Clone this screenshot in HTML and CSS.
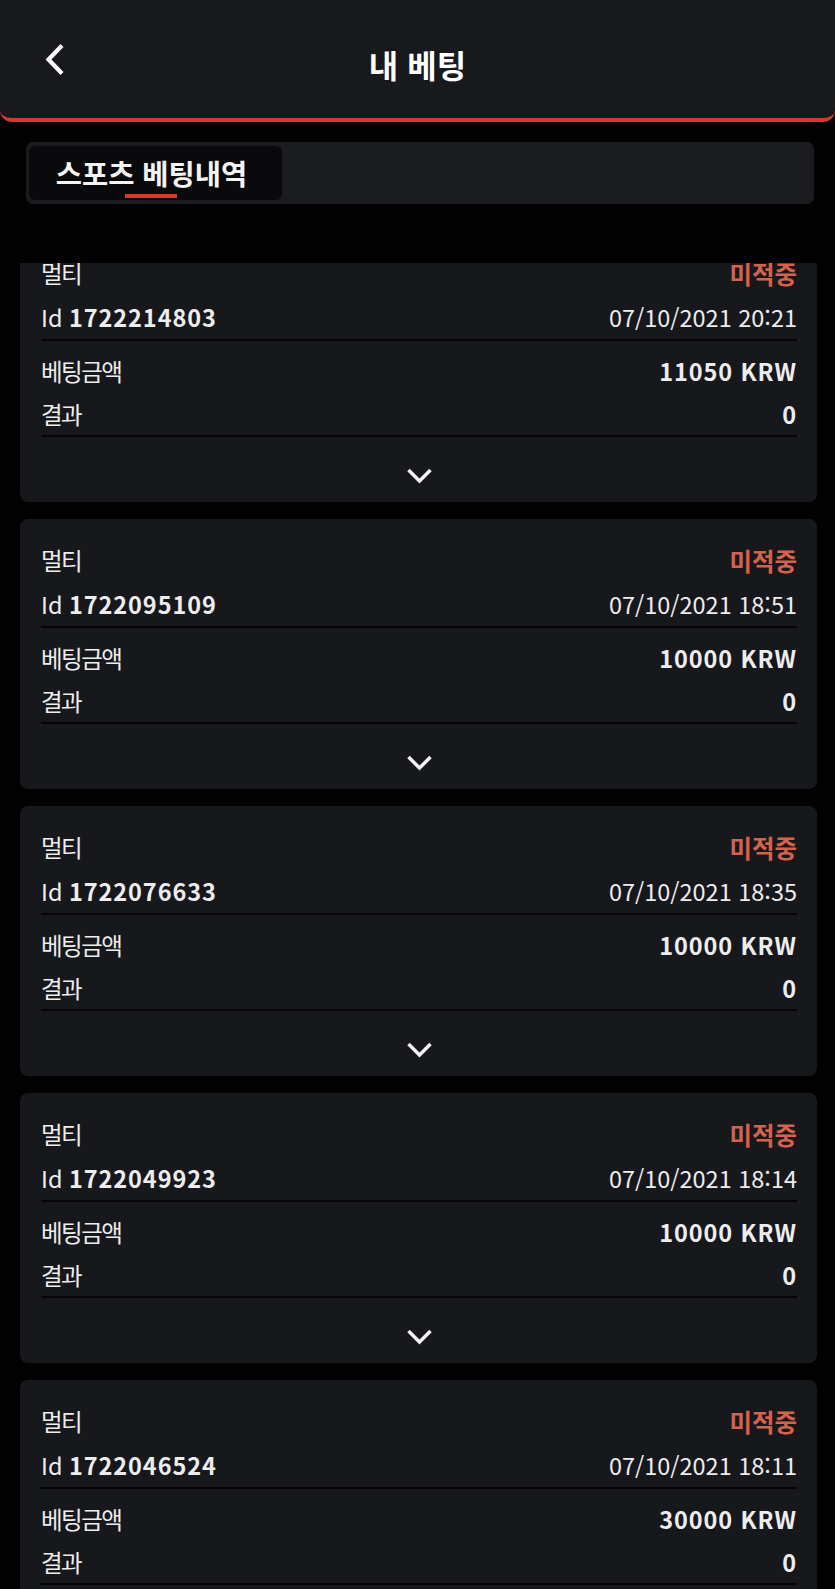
FILE: index.html
```html
<!DOCTYPE html>
<html lang="ko">
<head>
  <meta charset="UTF-8">
  <meta name="viewport" content="width=device-width, initial-scale=1.0">
  <title>내 베팅</title>
  <link rel="stylesheet" href="styles.css">
</head>
<body>
  <div class="page">
    <header class="top-bar">
      <button class="back-btn" aria-label="뒤로">
        <svg width="20" height="33" viewBox="0 0 20 33"><polyline points="17,2.5 3.5,16.5 17,30.5" fill="none" stroke="#fff" stroke-width="4.2" stroke-linejoin="miter"/></svg>
      </button>
      <h1 class="top-title">내 베팅</h1>
      <span></span>
    </header>

    <nav class="tabs">
      <div class="tab active">스포츠 베팅내역</div>
    </nav>

    <div class="bet-list">
      <div class="bet-list-inner">

        <div class="bet-card">
          <div class="bet-head">
            <div class="row"><span class="label">멀티</span><span class="status">미적중</span></div>
            <div class="row"><span>Id <b>1722214803</b></span><span>07/10/2021 20:21</span></div>
          </div>
          <div class="bet-body">
            <div class="row"><span class="label">베팅금액</span><b>11050 KRW</b></div>
            <div class="row"><span class="label">결과</span><b>0</b></div>
          </div>
          <div class="bet-foot">
            <svg width="27" height="17" viewBox="0 0 27 17"><polyline points="2.5,3 13.5,14 24.5,3" fill="none" stroke="#f2f2f2" stroke-width="3.5"/></svg>
          </div>
        </div>

        <div class="bet-card">
          <div class="bet-head">
            <div class="row"><span class="label">멀티</span><span class="status">미적중</span></div>
            <div class="row"><span>Id <b>1722095109</b></span><span>07/10/2021 18:51</span></div>
          </div>
          <div class="bet-body">
            <div class="row"><span class="label">베팅금액</span><b>10000 KRW</b></div>
            <div class="row"><span class="label">결과</span><b>0</b></div>
          </div>
          <div class="bet-foot">
            <svg width="27" height="17" viewBox="0 0 27 17"><polyline points="2.5,3 13.5,14 24.5,3" fill="none" stroke="#f2f2f2" stroke-width="3.5"/></svg>
          </div>
        </div>

        <div class="bet-card">
          <div class="bet-head">
            <div class="row"><span class="label">멀티</span><span class="status">미적중</span></div>
            <div class="row"><span>Id <b>1722076633</b></span><span>07/10/2021 18:35</span></div>
          </div>
          <div class="bet-body">
            <div class="row"><span class="label">베팅금액</span><b>10000 KRW</b></div>
            <div class="row"><span class="label">결과</span><b>0</b></div>
          </div>
          <div class="bet-foot">
            <svg width="27" height="17" viewBox="0 0 27 17"><polyline points="2.5,3 13.5,14 24.5,3" fill="none" stroke="#f2f2f2" stroke-width="3.5"/></svg>
          </div>
        </div>

        <div class="bet-card">
          <div class="bet-head">
            <div class="row"><span class="label">멀티</span><span class="status">미적중</span></div>
            <div class="row"><span>Id <b>1722049923</b></span><span>07/10/2021 18:14</span></div>
          </div>
          <div class="bet-body">
            <div class="row"><span class="label">베팅금액</span><b>10000 KRW</b></div>
            <div class="row"><span class="label">결과</span><b>0</b></div>
          </div>
          <div class="bet-foot">
            <svg width="27" height="17" viewBox="0 0 27 17"><polyline points="2.5,3 13.5,14 24.5,3" fill="none" stroke="#f2f2f2" stroke-width="3.5"/></svg>
          </div>
        </div>

        <div class="bet-card">
          <div class="bet-head">
            <div class="row"><span class="label">멀티</span><span class="status">미적중</span></div>
            <div class="row"><span>Id <b>1722046524</b></span><span>07/10/2021 18:11</span></div>
          </div>
          <div class="bet-body">
            <div class="row"><span class="label">베팅금액</span><b>30000 KRW</b></div>
            <div class="row"><span class="label">결과</span><b>0</b></div>
          </div>
          <div class="bet-foot">
            <svg width="27" height="17" viewBox="0 0 27 17"><polyline points="2.5,3 13.5,14 24.5,3" fill="none" stroke="#f2f2f2" stroke-width="3.5"/></svg>
          </div>
        </div>

      </div>
    </div>
  </div>
</body>
</html>
```

FILE: styles.css
```css
:root {
  --page-bg: #020203;
  --bar-bg: #18191d;
  --card-bg: #17181c;
  --tabs-bg: #1b1c20;
  --accent: #d5392d;
  --status: #d4624d;
  --text: #ededed;
}

html, body {
  margin: 0;
  padding: 0;
  background: var(--page-bg);
}

body {
  font-family: "Noto Sans CJK KR", "Noto Sans", sans-serif;
  color: var(--text);
}

.page {
  height: 100vh;
  display: flex;
  flex-direction: column;
  overflow: hidden;
}

/* top bar */
.top-bar {
  flex: none;
  height: 109px;
  padding-top: 9px;
  display: grid;
  grid-template-columns: 1fr auto 1fr;
  align-items: center;
  background: var(--bar-bg);
  border-bottom: 4px solid var(--accent);
  border-radius: 0 0 12px 12px;
}

.back-btn {
  justify-self: start;
  margin-left: 45px;
  margin-top: -8px;
  padding: 0;
  border: none;
  background: none;
  display: flex;
  cursor: pointer;
}

.top-title {
  margin: 0;
  font-size: 32px;
  font-weight: 700;
  color: #fff;
  line-height: 1;
}

/* tabs */
.tabs {
  flex: none;
  margin: 20px 21px 0 26px;
  padding: 4px 3px;
  display: flex;
  background: var(--tabs-bg);
  border-radius: 7px;
}

.tab {
  width: 253px;
  height: 54px;
  box-sizing: border-box;
  display: flex;
  align-items: center;
  justify-content: center;
  position: relative;
  background: #0a0a0c;
  border-radius: 6px;
  font-size: 28.5px;
  font-weight: 700;
  color: #f4f4f4;
  padding: 0 8px 2px 0;
}

.tab.active::after {
  content: '';
  position: absolute;
  left: 96px;
  bottom: 2px;
  width: 52px;
  height: 4px;
  background: var(--accent);
}

/* bet list */
.bet-list {
  flex: 1;
  margin-top: 59px;
  overflow: hidden;
}

.bet-list-inner {
  margin-top: -31px;
  display: flex;
  flex-direction: column;
  gap: 17px;
  padding: 0 18px 0 20px;
}

.bet-card {
  flex: none;
  height: 270px;
  box-sizing: border-box;
  padding: 0 20px 0 21px;
  background: var(--card-bg);
  border-radius: 8px;
}

.row {
  display: flex;
  justify-content: space-between;
  align-items: center;
  font-size: 23.5px;
}

.row .label {
  letter-spacing: -1.5px;
}

.row b {
  font-weight: 700;
  letter-spacing: 0.9px;
}

.bet-head {
  padding-top: 19px;
  border-bottom: 2px solid #050506;
}

.bet-head .row {
  height: 44px;
}

.status {
  color: var(--status);
  font-weight: 700;
  font-size: 24.5px;
}

.bet-body {
  padding-top: 8px;
  border-bottom: 2px solid #050506;
}

.bet-body .row {
  height: 43px;
}

.bet-foot {
  height: 65px;
  box-sizing: border-box;
  padding-top: 30px;
  display: flex;
  justify-content: center;
}
```
